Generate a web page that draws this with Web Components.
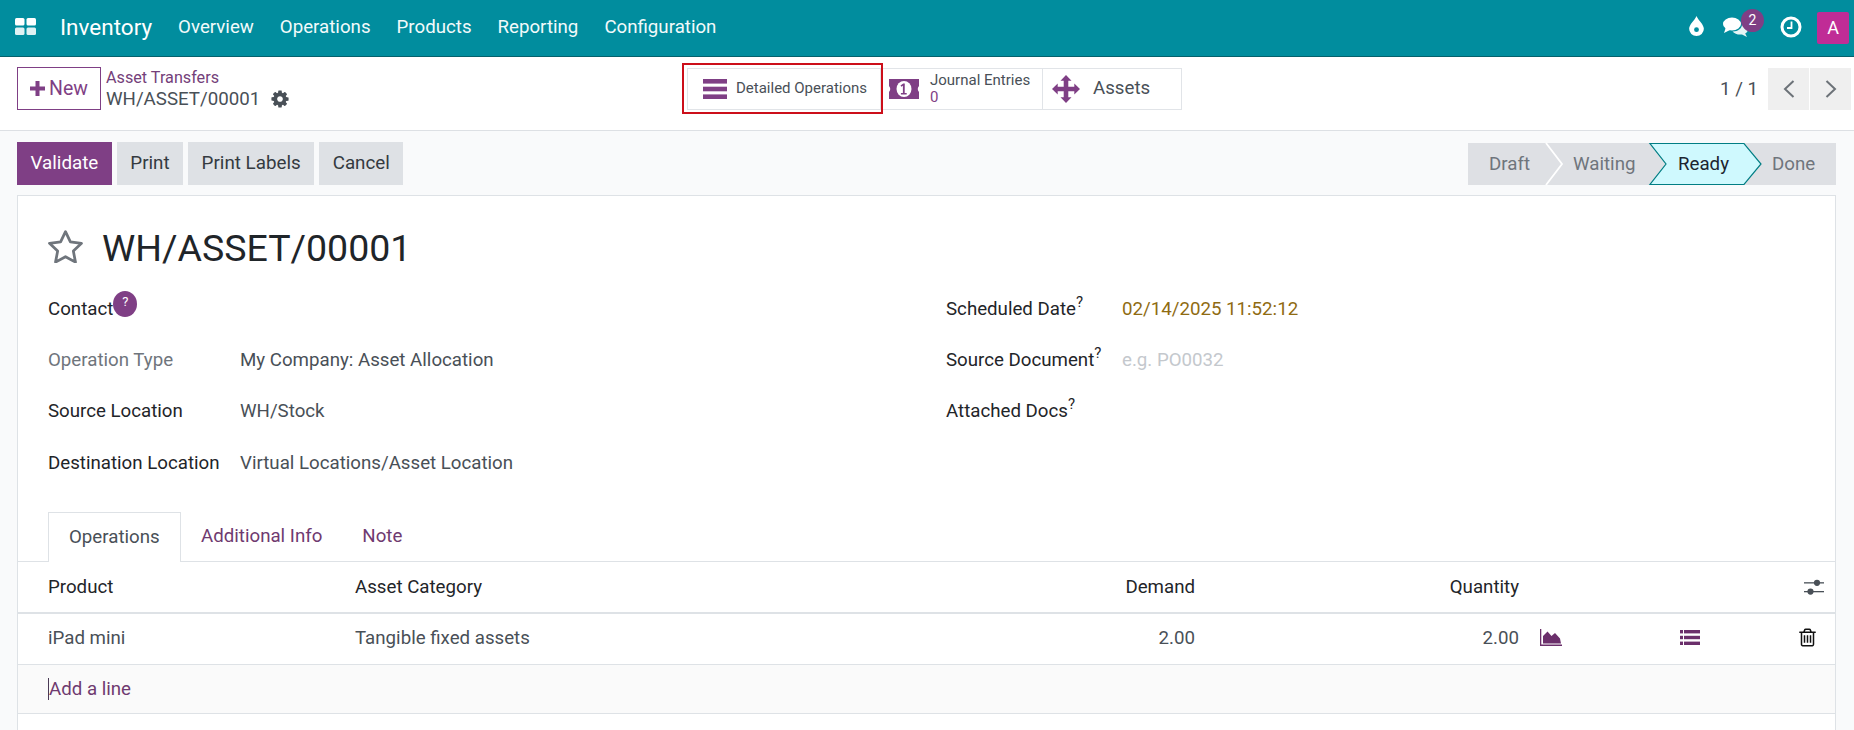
<!DOCTYPE html>
<html lang="en"><head><meta charset="utf-8"><title>Inventory</title>
<style>
html,body{margin:0;padding:0;height:730px;overflow:hidden;background:#f9fafb;font-family:Roboto,"Liberation Sans",sans-serif;font-size:18.7px;color:#495057}
</style></head>
<body>
<o-navbar></o-navbar>
<o-control-panel></o-control-panel>
<o-action-row></o-action-row>
<o-sheet></o-sheet>
<script>
const I={
cog:'<svg viewBox="0 0 1792 1792" width="20" height="20" fill="currentColor"><path d="M1152 896q0-106-75-181t-181-75-181 75-75 181 75 181 181 75 181-75 75-181zm512-109v222q0 12-8 23t-20 13l-185 28q-19 54-39 91 35 50 107 138 10 12 10 25t-9 23q-27 37-99 108t-94 71q-12 0-26-9l-138-108q-44 23-91 38-16 136-29 186-7 28-36 28h-222q-14 0-24.500-8.500t-11.500-21.500l-28-184q-49-16-90-37l-141 107q-10 9-25 9-14 0-25-11-126-114-165-168-7-10-7-23 0-12 8-23 15-21 51-66.500t54-70.500q-27-50-41-99l-183-27q-13-2-21-12.500t-8-23.500v-222q0-12 8-23t19-13l186-28q14-46 39-92-40-57-107-138-10-12-10-24 0-10 9-23 26-36 98.500-107.500t94.500-71.500q13 0 26 10l138 107q44-23 91-38 16-136 29-186 7-28 36-28h222q14 0 24.500 8.500t11.500 21.500l28 184q49 16 90 37l142-107q9-9 24-9 13 0 25 10 129 119 165 170 7 8 7 22 0 12-8 23-15 21-51 66.500t-54 70.500q26 50 41 98l183 28q13 2 21 12.500t8 23.500z"/></svg>',
trash:'<svg viewBox="0 0 1792 1792" width="21" height="21" fill="#111"><path d="M704 736v576q0 14-9 23t-23 9h-64q-14 0-23-9t-9-23v-576q0-14 9-23t23-9h64q14 0 23 9t9 23zm256 0v576q0 14-9 23t-23 9h-64q-14 0-23-9t-9-23v-576q0-14 9-23t23-9h64q14 0 23 9t9 23zm256 0v576q0 14-9 23t-23 9h-64q-14 0-23-9t-9-23v-576q0-14 9-23t23-9h64q14 0 23 9t9 23zm128 724v-948h-896v948q0 22 7 40.500t14.500 27 10.500 8.500h832q3 0 10.500-8.500t14.500-27 7-40.500zm-672-1076h448l-48-117q-7-9-17-11h-317q-10 2-17 11zm928 32v64q0 14-9 23t-23 9h-96v948q0 83-47 143.500t-113 60.500h-832q-66 0-113-58.500t-47-141.500v-952h-96q-14 0-23-9t-9-23v-64q0-14 9-23t23-9h309l70-167q15-37 54-63t79-26h320q40 0 79 26t54 63l70 167h309q14 0 23 9t9 23z"/></svg>',
sliders:'<svg width="20" height="16" viewBox="0 0 20 16" fill="#495057"><rect x="0" y="3.200" width="20" height="1.300"/><rect x="0" y="12" width="20" height="1.300"/><circle cx="13" cy="3.800" r="3.100"/><circle cx="6.500" cy="12.600" r="3.100"/></svg>',
area:'<svg width="22" height="17" viewBox="0 0 22 17" fill="#6b2f6b"><path d="M0 0h1.300v15.500H22V17H0z"/><path d="M3 14.500V7L7.500 2.500 11.500 7 15 4l5 5.500L21 14.500z"/></svg>',
list:'<svg width="20" height="15" viewBox="0 0 20 15" fill="#6b2f6b"><rect x="0" y="0" width="3" height="3.400"/><rect x="4" y="0" width="16" height="3.400"/><rect x="0" y="5.800" width="3" height="3.400"/><rect x="4" y="5.800" width="16" height="3.400"/><rect x="0" y="11.600" width="3" height="3.400"/><rect x="4" y="11.600" width="16" height="3.400"/></svg>'
};
function def(name,css,html){
  customElements.define(name,class extends HTMLElement{
    connectedCallback(){
      if(this.shadowRoot)return;
      const r=this.attachShadow({mode:'open'});
      const h=typeof html==='function'?html(this):html;
      r.innerHTML='<style>'+css+'</style>'+h;
    }
  });
}
def('o-app-grid',':host{display:block;width:21px;height:17px}',
'<svg width="21" height="17" viewBox="0 0 21 17" style="display:block"><rect x="0" y="0" width="9.500" height="7.500" rx="1.500" fill="#fff"/><rect x="11.500" y="0" width="9.500" height="7.500" rx="1.500" fill="#fff"/><rect x="0" y="9.500" width="9.500" height="7.500" rx="1.500" fill="#dff1f3"/><rect x="11.500" y="9.500" width="9.500" height="7.500" rx="1.500" fill="#dff1f3"/></svg>');

def('o-navbar',`:host{display:flex;align-items:center;box-sizing:border-box;height:57px;background:#018d9e;border-bottom:1px solid #05616c;color:#fff;padding:0 5px 3px 15px}
.brand{font-size:22.500px;margin:0 26px 0 24px}
nav{display:flex;gap:26px;font-size:18.700px;color:#f2fafb}
.sp{flex:1}
.sys{display:flex;align-items:center}
.bub{position:relative;display:block;width:25px;height:20px}
.badge{position:absolute;left:18px;top:-8px;width:23px;height:23px;border-radius:50%;background:#7f3f85;color:#fff;font-size:14px;line-height:23px;text-align:center}
.av{width:32px;height:32px;background:#c02c96;border-radius:2px;font-size:18px;line-height:32px;text-align:center;color:#fff;margin-left:15px;margin-top:3px}
svg{display:block}`,
`<o-app-grid></o-app-grid><span class="brand">Inventory</span>
<nav><span>Overview</span><span>Operations</span><span>Products</span><span>Reporting</span><span>Configuration</span></nav>
<span class="sp"></span>
<div class="sys">
<svg width="15" height="20" viewBox="0 0 14 19" style="margin-top:-1px"><path d="M7 0C9 4.500 14 8 14 12.200A7 6.800 0 0 1 0 12.200C0 8 5 4.500 7 0z" fill="#fff"/><circle cx="7" cy="13" r="2.300" fill="#018d9e"/></svg>
<span class="bub" style="margin-left:19px"><svg width="25" height="20" viewBox="0 0 25 20"><ellipse cx="9" cy="7" rx="9" ry="6.500" fill="#fff"/><path d="M3 10L1 16l6-3z" fill="#fff"/><path d="M19 6.500c3.500 1 6 3.200 6 5.800 0 1.800-1.100 3.200-2.800 4.200L24 20l-5-2.500c-3.800.5-7.500-.6-9.500-3 5.200.2 10-3 9.500-8z" fill="#e6f4f5"/></svg><span class="badge">2</span></span>
<svg style="margin-left:32px" width="22" height="22" viewBox="0 0 22 22"><circle cx="11" cy="11" r="9" fill="none" stroke="#fff" stroke-width="3"/><path d="M11.500 5.500v6.500H7" fill="none" stroke="#fff" stroke-width="1.800"/></svg>
<span class="av">A</span>
</div>`);

def('o-stat-btn',`:host{display:flex;align-items:center;box-sizing:border-box;height:42px;background:#fff;border:1px solid #e1e4e8;margin-left:-1px;color:#495057;line-height:17px;font-size:15px;white-space:nowrap;position:relative;width:var(--w);padding-left:var(--il);gap:var(--ir)}
.i{display:flex;flex:none}`,
`<span class="i"><slot name="icon"></slot></span><span><slot></slot></span>`);

def('o-highlight',`:host{position:absolute;left:-5px;top:-5px;width:201px;height:51px;box-sizing:border-box;border:2px solid #cc0f1a;pointer-events:none}`,'');

def('o-pager',`:host{display:flex;align-items:center}
.n{font-size:18.700px;margin-right:9px;color:#495057}
b{display:flex;align-items:center;justify-content:center;width:41px;height:42px;background:#efefef;margin-left:1px}
svg{display:block}`,
`<span class="n">1 / 1</span>
<b><svg width="12" height="20" viewBox="0 0 12 20"><path d="M10.500 2L2 10l8.500 8" fill="none" stroke="#6c7278" stroke-width="2"/></svg></b>
<b><svg width="12" height="20" viewBox="0 0 12 20"><path d="M1.500 2L10 10l-8.500 8" fill="none" stroke="#6c7278" stroke-width="2"/></svg></b>`);

def('o-control-panel',`:host{display:flex;align-items:center;box-sizing:border-box;height:74px;background:#fff;border-bottom:1px solid #dde0e4;padding:0 3px 10px 17px;position:relative}
.new{display:flex;align-items:center;justify-content:center;gap:4px;box-sizing:border-box;width:84px;height:43px;border:1px solid #7f3f85;color:#7f3f85;font-size:19.500px}
.crumb{margin-left:5px;width:581px}
.crumb a{display:block;color:#74407a;font-size:16.200px;line-height:20px}
.crumb div{display:flex;align-items:center;gap:10px;font-size:18.700px;line-height:22px;color:#495057}
.stats{display:flex;position:relative}
.sp{flex:1}
svg{display:block}`,
`<span class="new"><svg width="15" height="15" viewBox="0 0 15 15"><path d="M5.500 0h4v5.500H15v4H9.500V15h-4V9.500H0v-4h5.500z" fill="#7f3f85"/></svg>New</span>
<div class="crumb"><a>Asset Transfers</a><div><span>WH/ASSET/00001</span>${I.cog}</div></div>
<div class="stats">
<o-stat-btn style="--w:194px;--il:15px;--ir:9px;margin-left:0"><svg slot="icon" width="24" height="20" viewBox="0 0 24 20" fill="#7f3f85"><rect width="24" height="4.600"/><rect y="7.700" width="24" height="4.600"/><rect y="15.400" width="24" height="4.600"/></svg>Detailed Operations</o-stat-btn>
<o-stat-btn style="--w:163px;--il:8px;--ir:11px"><svg slot="icon" width="30" height="20" viewBox="0 0 30 20"><path d="M0 0h30v20H0z" fill="#7f3f85"/><ellipse cx="15" cy="10" rx="7.500" ry="8" fill="#fff"/><path d="M15.800 4.500h-1.600l-2.700 2 .9 1.300 1.500-1V14h-2v1.500h5.800V14h-2z" fill="#7f3f85"/><path d="M0 7q2.500 3 0 6zM30 7q-2.500 3 0 6z" fill="#fff"/></svg><span style="display:block">Journal Entries</span><span style="display:block;color:#7f3f85">0</span></o-stat-btn>
<o-stat-btn style="--w:140px;--il:9px;--ir:13px;font-size:18.700px"><svg slot="icon" width="28" height="28" viewBox="0 0 28 28" fill="#7f3f85"><path d="M14 0l5.500 5.800h-3.200v6h6V8.500L28 14l-5.700 5.500v-3.300h-6v6h3.200L14 28l-5.500-5.800h3.200v-6h-6v3.300L0 14l5.700-5.500v3.300h6v-6H8.500z"/></svg>Assets</o-stat-btn>
<o-highlight></o-highlight>
</div>
<span class="sp"></span>
<o-pager></o-pager>`);

def('o-btn',`:host{display:block;box-sizing:border-box;height:43px;line-height:43px;padding:0 13.500px;font-size:18.800px;background:#dee1e5;color:#343a40}
:host([primary]){background:#7f3f85;color:#fff}`,'<slot></slot>');

def('o-stage',`:host{display:block;box-sizing:border-box;position:relative;height:42px;line-height:42px;font-size:18.700px;color:#6f757c;width:var(--w);padding-left:var(--p)}
:host([active]){color:#1c2530;z-index:1}
span{position:relative}
svg{position:absolute;left:0;top:0;overflow:visible;display:block}`,
h=>{
 if(h.hasAttribute('active'))return `<svg width="112" height="42" viewBox="0 0 112 42"><path d="M0 .5H94L111 21 94 41.500H0L16 21z" fill="#cff9fe" stroke="#017e84" stroke-width="1.200"/></svg><span><slot></slot></span>`;
 if(h.hasAttribute('arrow'))return `<svg width="96" height="42" viewBox="0 0 96 42"><path d="M78 0L94 21 78 42" fill="none" stroke="#fff" stroke-width="1.800"/></svg><span><slot></slot></span>`;
 return '<span><slot></slot></span>';
});

def('o-statusbar',`:host{display:flex;background:#dee0e4;height:42px;overflow:visible}`,'<slot></slot>');

def('o-action-row',`:host{display:flex;align-items:flex-start;box-sizing:border-box;height:64px;padding:11px 18px 0 17px}
.b{display:flex;gap:5px}
.sp{flex:1}
o-statusbar{margin-top:1px}`,
`<div class="b"><o-btn primary>Validate</o-btn><o-btn>Print</o-btn><o-btn>Print Labels</o-btn><o-btn>Cancel</o-btn></div>
<span class="sp"></span>
<o-statusbar>
<o-stage arrow style="--w:82px;--p:21px">Draft</o-stage>
<o-stage style="--w:100px;--p:23px">Waiting</o-stage>
<o-stage active style="--w:94px;--p:28px">Ready</o-stage>
<o-stage style="--w:92px;--p:28px">Done</o-stage>
</o-statusbar>`);

def('o-field',`:host{display:grid;grid-template-columns:var(--lw,192px) 1fr;align-items:center;height:51px;font-size:18.700px}
.l{color:#1f2529;position:relative}
:host([muted]) .l{color:#6f757c}
.v{color:#495057}`,
`<span class="l"><slot name="label"></slot></span><span class="v"><slot></slot></span>`);

def('o-help',`:host{display:inline-block;width:24px;height:26px;border-radius:50%;background:#7f3f85;color:#fff;font-size:13px;line-height:22px;text-align:center;vertical-align:9px;margin-top:-12px}`,'?');

def('o-tabs',`:host{display:flex;align-items:flex-end;box-sizing:border-box;height:50px;border-bottom:1px solid #dee2e6;padding-left:30px;font-size:18.700px}
.t{box-sizing:border-box;height:49px;line-height:49px;padding:0 20px;color:#6f3a70}
.a{height:50px;margin-bottom:-1px;background:#fff;border:1px solid #dee2e6;border-bottom:0;color:#495057;width:133px;padding:0 20px}`,
`<span class="t a">Operations</span><span class="t">Additional Info</span><span class="t">Note</span>`);

const COLS='grid-template-columns:337px 545px 295px 324px 161px 110px 46px';
def('o-list',`:host{display:block;font-size:18.700px}
.r{display:grid;${COLS};align-items:center;box-sizing:border-box;height:51px;padding-bottom:3px;border-bottom:1px solid #dee2e6}
.h{color:#1f2529;height:52px;padding-bottom:0;border-bottom:2px solid #dee2e6}
.add{background:#fafafa;height:49px;padding-bottom:0;color:#6f3a70}
.p{padding-left:30px}
.e{text-align:right}
.c{padding-left:21px;display:flex}
.d{display:flex}
.car{border-left:1px solid #4a3a55;line-height:22px;display:inline-block;margin-left:30px}
svg{display:block}`,
`<div class="r h"><span class="p">Product</span><span>Asset Category</span><span class="e">Demand</span><span class="e">Quantity</span><span></span><span></span><span class="d" style="padding-left:14px">${I.sliders}</span></div>
<div class="r"><span class="p">iPad mini</span><span>Tangible fixed assets</span><span class="e">2.00</span><span class="e">2.00</span><span class="c">${I.area}</span><span class="d">${I.list}</span><span class="d" style="padding-left:7px">${I.trash}</span></div>
<div class="r add"><span><span class="car">Add a line</span></span></div>`);

def('o-sheet',`:host{display:block;box-sizing:border-box;margin:0 18px 0 17px;height:535px;background:#fff;border:1px solid #dee2e6;border-bottom:0;padding-top:27px}
.title{display:flex;align-items:center;gap:19px;padding-left:30px;height:50px;font-size:37.500px;color:#1f2529}
.title svg{margin-top:-3px}
svg{display:block}
.form{display:grid;grid-template-columns:898px 1fr;margin:10px 0 24px;padding-left:30px}
.col{display:block}
.gold{color:#8f6b12}
.ph{color:#c4c8cd}
sup{font-size:15px;line-height:0;vertical-align:8px}`,
`<div class="title"><svg width="35" height="33" viewBox="1 1 33 31"><path d="M17.500 2.500l4.600 9.600 10.500 1.400-7.700 7.300 2 10.400-9.400-5.100-9.400 5.100 2-10.400-7.700-7.300 10.500-1.400z" fill="none" stroke="#6f757c" stroke-width="2.600" stroke-linejoin="round"/></svg><span>WH/ASSET/00001</span></div>
<div class="form">
<div class="col">
<o-field><span slot="label">Contact<o-help></o-help></span></o-field>
<o-field muted><span slot="label">Operation Type</span>My Company: Asset Allocation</o-field>
<o-field><span slot="label">Source Location</span>WH/Stock</o-field>
<o-field style="height:52px;padding-top:1px;box-sizing:border-box"><span slot="label">Destination Location</span>Virtual Locations/Asset Location</o-field>
</div>
<div class="col" style="--lw:176px">
<o-field><span slot="label">Scheduled Date<sup>?</sup></span><span class="gold">02/14/2025 11:52:12</span></o-field>
<o-field><span slot="label">Source Document<sup>?</sup></span><span class="ph">e.g. PO0032</span></o-field>
<o-field><span slot="label">Attached Docs<sup>?</sup></span></o-field>
</div>
</div>
<o-tabs></o-tabs>
<o-list></o-list>`);
</script>
</body></html>
